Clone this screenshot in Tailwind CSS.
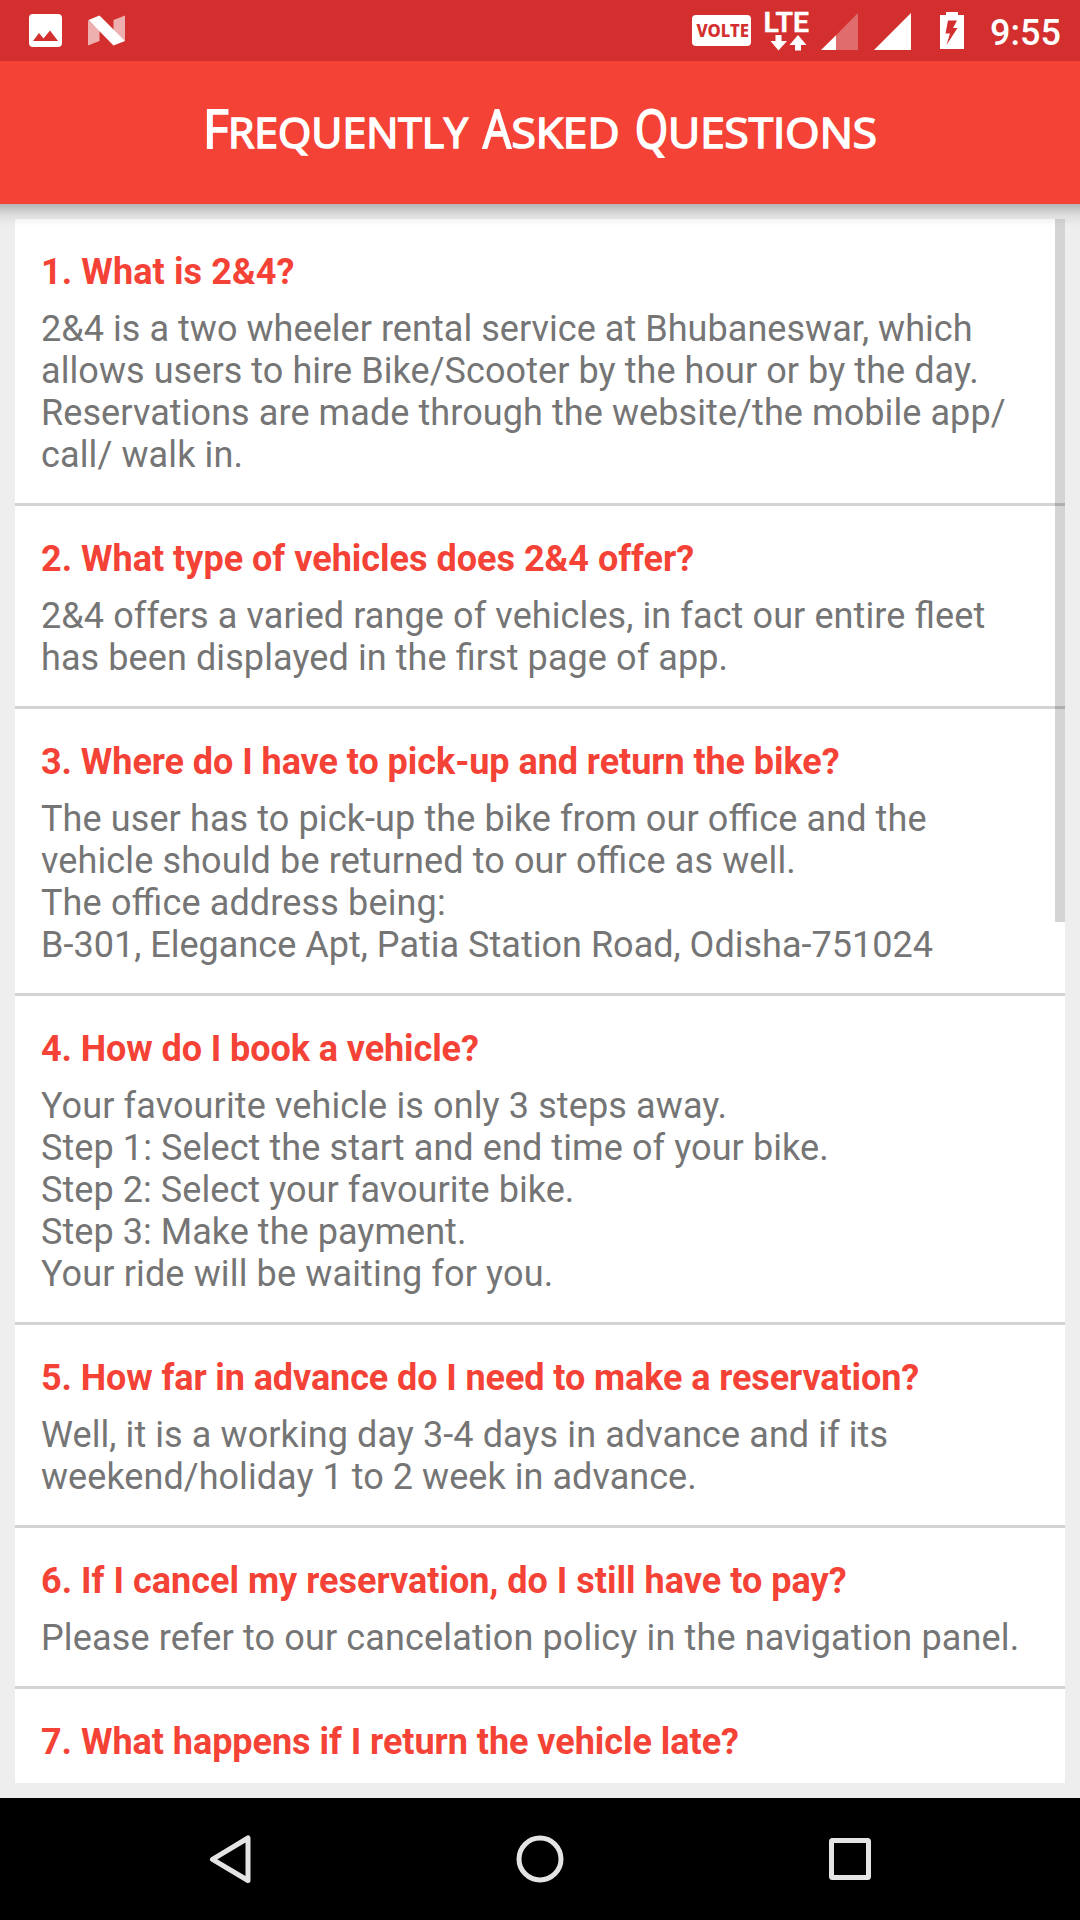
<!DOCTYPE html>
<html lang="en">
<head>
<meta charset="utf-8">
<title>Frequently Asked Questions</title>
<script src="https://cdn.jsdelivr.net/npm/@tailwindcss/browser@4"></script>
</head>
<body class="flex h-[1920px] w-[1080px] flex-col overflow-hidden bg-[#eeeeee] font-['Roboto',sans-serif]">
  <!-- Status bar -->
  <div class="flex h-[61px] shrink-0 bg-[#d32f2f] text-white">
    <svg class="h-[61px] w-[680px]" viewBox="0 0 680 61" fill="#fff">
      <path fill-rule="evenodd" d="M33 14H58Q62 14 62 18V43Q62 47 58 47H33Q29 47 29 43V18Q29 14 33 14ZM33 41H58L50 30.500L43.500 38.500L39 33Z"/>
      <path opacity=".62" d="M88 20L99.500 30.500V41L88 45.500ZM113.500 20L125 15.500V41L113.500 31Z"/>
      <path d="M88.500 20L99.500 15.500L125 41L113.500 45.500Z"/>
    </svg>
    <svg class="h-[61px] w-[303px]" viewBox="680 0 303 61" fill="#fff">
      <rect x="692" y="15" width="59" height="31" rx="4"/>
      <text x="696.500" y="36.700" font-family="Noto Sans, sans-serif" font-weight="800" font-size="17" fill="#d32f2f" textLength="52.500" lengthAdjust="spacingAndGlyphs">VOLTE</text>
      <text x="763.500" y="32" font-family="Roboto, sans-serif" font-weight="600" font-size="28" stroke="#fff" stroke-width=".5" textLength="45.500" lengthAdjust="spacingAndGlyphs">LTE</text>
      <path d="M775.500 35H781.500V41H787L778.500 50.500L770.500 41H775.500ZM795 50.500V45H789.500L798 35L806.500 45H801V50.500Z"/>
      <path opacity=".3" d="M836 35.300L858 13V50H836Z"/>
      <path d="M821 50L836 35.300V50ZM874 50L911 13V50Z"/>
      <path fill-rule="evenodd" d="M946 12H958V15H964V49H940V15H946ZM948 20.500H957L953 28H957.500L946.500 45L950 33.500H945.500Z"/>
    </svg>
    <div class="pt-[12px] pl-[7px] text-[36px] leading-[42px] font-medium">9:55</div>
  </div>

  <!-- App bar -->
  <header class="relative z-10 h-[143px] shrink-0 bg-[#f44336]">
    <svg class="h-[143px] w-full" viewBox="0 61 1080 143" fill="#fff" stroke="#fff" font-family="Open Sans, sans-serif" font-weight="400">
      <text y="148.300"><tspan x="203" font-size="52.500" stroke-width="1.900" textLength="25.500" lengthAdjust="spacingAndGlyphs">F</tspan><tspan x="228" font-size="41.500" stroke-width="1.600" textLength="240" lengthAdjust="spacingAndGlyphs">REQUENTLY</tspan></text>
      <text y="148.300"><tspan x="483" font-size="52.500" stroke-width="1.900" textLength="28" lengthAdjust="spacingAndGlyphs">A</tspan><tspan x="511.500" font-size="41.500" stroke-width="1.600" textLength="108" lengthAdjust="spacingAndGlyphs">SKED</tspan></text>
      <text y="148.300"><tspan x="635" font-size="52.500" stroke-width="1.900" textLength="33" lengthAdjust="spacingAndGlyphs">Q</tspan><tspan x="668" font-size="41.500" stroke-width="1.600" textLength="209" lengthAdjust="spacingAndGlyphs">UESTIONS</tspan></text>
    </svg>
    <div class="absolute inset-x-0 top-[143px] h-[22px] bg-linear-to-b from-black/24 via-black/7 to-black/0"></div>
  </header>

  <!-- Question list -->
  <main class="relative mx-[15px] mt-[15px] h-[1564px] shrink-0 overflow-hidden bg-white text-[36px] leading-[42px] whitespace-nowrap text-[#757575] [font-feature-settings:'liga'_1]">
    <section class="border-b-3 border-[#d3d3d3] px-[26px] pt-[32px] pb-[27px]">
      <h2 class="mb-[15px] font-bold tracking-[0.1px] text-[#f44336]">1. What is 2&amp;4?</h2>
      <p class="tracking-[0.05px]">2&amp;4 is a two wheeler rental service at Bhubaneswar, which</p>
      <p class="tracking-[0.07px]">allows users to hire Bike/Scooter by the hour or by the day.</p>
      <p class="tracking-[0.085px]">Reservations are made through the website/the mobile app/</p>
      <p class="tracking-[0.12px]">call/ walk in.</p>
    </section>
    <section class="border-b-3 border-[#d3d3d3] px-[26px] pt-[32px] pb-[27px]">
      <h2 class="mb-[15px] font-bold text-[#f44336]">2. What type of vehicles does 2&amp;4 offer?</h2>
      <p class="tracking-[0.1px]">2&amp;4 offers a varied range of vehicles, in fact our entire fleet</p>
      <p class="tracking-[0.09px]">has been displayed in the first page of app.</p>
    </section>
    <section class="border-b-3 border-[#d3d3d3] px-[26px] pt-[32px] pb-[27px]">
      <h2 class="mb-[15px] font-bold tracking-[-0.06px] text-[#f44336]">3. Where do I have to pick-up and return the bike?</h2>
      <p class="tracking-[0.11px]">The user has to pick-up the bike from our office and the</p>
      <p class="tracking-[0.12px]">vehicle should be returned to our office as well.</p>
      <p class="tracking-[0.14px]">The office address being:</p>
      <p class="tracking-[0.02px]">B-301, Elegance Apt, Patia Station Road, Odisha-751024</p>
    </section>
    <section class="border-b-3 border-[#d3d3d3] px-[26px] pt-[32px] pb-[27px]">
      <h2 class="mb-[15px] font-bold tracking-[-0.09px] text-[#f44336]">4. How do I book a vehicle?</h2>
      <p class="tracking-[0.12px]">Your favourite vehicle is only 3 steps away.</p>
      <p class="tracking-[0.09px]">Step 1: Select the start and end time of your bike.</p>
      <p class="tracking-[0.07px]">Step 2: Select your favourite bike.</p>
      <p class="tracking-[0.05px]">Step 3: Make the payment.</p>
      <p class="tracking-[0.14px]">Your ride will be waiting for you.</p>
    </section>
    <section class="border-b-3 border-[#d3d3d3] px-[26px] pt-[32px] pb-[27px]">
      <h2 class="mb-[15px] font-bold tracking-[-0.1px] text-[#f44336]">5. How far in advance do I need to make a reservation?</h2>
      <p class="tracking-[0.09px]">Well, it is a working day 3-4 days in advance and if its</p>
      <p class="tracking-[0.05px]">weekend/holiday 1 to 2 week in advance.</p>
    </section>
    <section class="border-b-3 border-[#d3d3d3] px-[26px] pt-[32px] pb-[27px]">
      <h2 class="mb-[15px] font-bold tracking-[0.01px] text-[#f44336]">6. If I cancel my reservation, do I still have to pay?</h2>
      <p class="tracking-[0.145px]">Please refer to our cancelation policy in the navigation panel.</p>
    </section>
    <section class="px-[26px] pt-[32px]">
      <h2 class="font-bold tracking-[-0.04px] text-[#f44336]">7. What happens if I return the vehicle late?</h2>
    </section>
    <div class="absolute top-0 right-0 h-[703px] w-[10px] bg-black/17"></div>
  </main>

  <!-- Navigation bar -->
  <nav class="mt-[15px] h-[122px] shrink-0 bg-black">
    <svg class="h-[122px] w-full" viewBox="0 1798 1080 122" fill="none" stroke="#e4e4e4" stroke-width="5" stroke-linejoin="round">
      <path d="M248 1838V1880.500L212.500 1859.300Z"/>
      <circle cx="540" cy="1859" r="21"/>
      <rect x="831.500" y="1840.500" width="37" height="37" rx="1"/>
    </svg>
  </nav>
</body>
</html>
